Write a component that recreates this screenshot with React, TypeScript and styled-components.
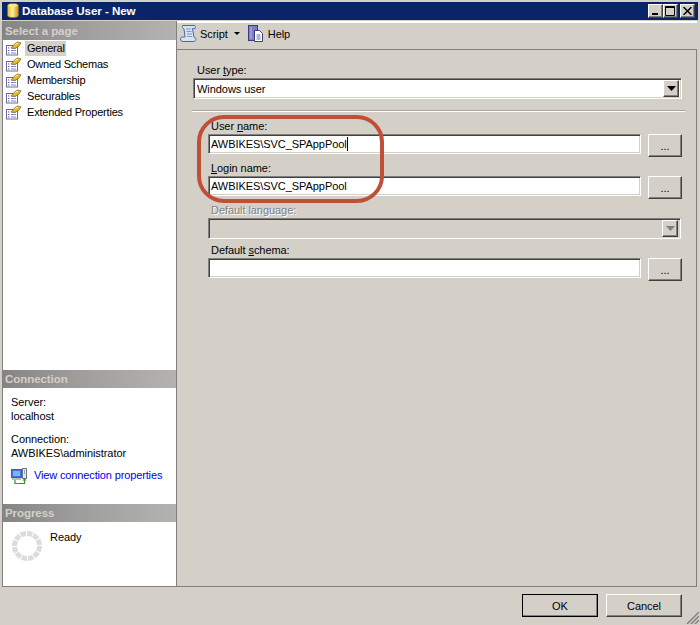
import React from "react";
import styled, { createGlobalStyle } from "styled-components";

const GlobalStyle = createGlobalStyle`
  html, body { margin: 0; padding: 0; background: #d4d0c8; }
  * { box-sizing: border-box; }
`;

const raisedBorder = `
  border: 1px solid;
  border-color: #ffffff #404040 #404040 #ffffff;
  box-shadow: inset -1px -1px 0 #808080;
`;

const sunkenBorder = `
  border: 1px solid;
  border-color: #808080 #ffffff #ffffff #808080;
  box-shadow: inset 1px 1px 0 #404040, inset -1px -1px 0 #d4d0c8;
`;

const Window = styled.div`
  position: relative;
  width: 700px;
  height: 625px;
  padding: 2px;
  background: #d4d0c8;
  font-family: "Liberation Sans", Arial, sans-serif;
  font-size: 11px;
  letter-spacing: -0.06px;
  color: #000;
  overflow: hidden;
`;

const TitleBar = styled.div`
  display: flex;
  align-items: center;
  height: 18px;
  padding: 0 3px 1px 5px;
  background: #0a246a;
  color: #fff;
  font-size: 11.6px;
  font-weight: bold;
`;

const TitleText = styled.span`
  margin-left: 3px;
  flex: 1;
`;

const CaptionButton = styled.div<{ $gap?: number }>`
  ${raisedBorder}
  display: flex;
  align-items: center;
  justify-content: center;
  width: 15px;
  height: 14px;
  margin-left: ${(p) => p.$gap ?? 0}px;
  background: #d4d0c8;
`;

const Main = styled.div`
  display: flex;
  height: 566px;
  margin-top: 1px;
  margin-right: 1px;
`;

const Sidebar = styled.div`
  display: flex;
  flex-direction: column;
  width: 175px;
  background: #fff;
  border-left: 1px solid #808080;
  border-right: 1px solid #808080;
  border-bottom: 1px solid #808080;
`;

const SectionHeader = styled.div<{ $tall?: boolean }>`
  display: flex;
  align-items: center;
  height: ${(p) => (p.$tall ? 19 : 18)}px;
  padding-left: 2px;
  background: linear-gradient(90deg, #858585 0%, #a09d9d 45%, #b5b2b2 100%);
  color: #d4d0c8;
  font-size: 11.5px;
  font-weight: bold;
`;

const PageList = styled.div`
  flex: 1;
`;

const PageRow = styled.div`
  display: flex;
  align-items: center;
  height: 16px;
  padding-left: 3px;
`;

const PageLabel = styled.span<{ $selected?: boolean }>`
  margin-left: 3px;
  padding: 0 1px 0 2px;
  line-height: 15px;
  letter-spacing: -0.2px;
  background: ${(p) => (p.$selected ? "#d4d0c8" : "transparent")};
`;

const ConnectionBody = styled.div`
  height: 116px;
  padding: 8px 0 0 8px;
  line-height: 13.5px;
`;

const ConnectionBlock = styled.div`
  margin-bottom: 10px;

  & + & {
    margin-bottom: 8px;
  }
`;

const ConnectionLink = styled.div`
  display: flex;
  align-items: center;
  letter-spacing: -0.14px;
  color: #0000ee;
`;

const LinkText = styled.span`
  margin-left: 7px;
`;

const ProgressBody = styled.div`
  display: flex;
  height: 64px;
  padding: 8px 0 0 8px;
`;

const ReadyText = styled.span`
  margin: 1px 0 0 7px;
`;

const Content = styled.div`
  display: flex;
  flex: 1;
  flex-direction: column;
`;

const Toolbar = styled.div`
  display: flex;
  align-items: center;
  height: 29px;
  padding: 0 0 5px 3px;
  border-top: 2px solid #ffffff;
  border-bottom: 1px solid #808080;
`;

const ToolLabel = styled.span`
  margin-left: 3px;
`;

const ToolCaret = styled.span`
  width: 0;
  height: 0;
  margin: 0 8px 0 6px;
  border-left: 3px solid transparent;
  border-right: 3px solid transparent;
  border-top: 3px solid #000;
`;

const Panel = styled.div`
  flex: 1;
  padding: 13px 0 0 16px;
  border-right: 1px solid #808080;
  border-bottom: 1px solid #808080;
`;

const FieldLabel = styled.div<{ $disabled?: boolean }>`
  height: 15px;
  line-height: 15px;
  color: ${(p) => (p.$disabled ? "#808080" : "#000")};
  text-shadow: ${(p) => (p.$disabled ? "1px 1px 0 #fff" : "none")};
`;

const TypeLabel = styled(FieldLabel)`
  margin-left: 4px;
`;

const Combo = styled.div<{ $width: number; $disabled?: boolean }>`
  ${sunkenBorder}
  display: flex;
  align-items: center;
  justify-content: space-between;
  width: ${(p) => p.$width}px;
  height: 21px;
  padding: 2px;
  padding-left: 3px;
  background: ${(p) => (p.$disabled ? "#d4d0c8" : "#fff")};
`;

const ComboButton = styled.div`
  ${raisedBorder}
  display: flex;
  align-items: center;
  justify-content: center;
  width: 16px;
  height: 17px;
  background: #d4d0c8;
`;

const Separator = styled.div`
  width: 493px;
  height: 2px;
  margin: 11px 0 7px -1px;
  background: #a8a5a0;
  border-bottom: 1px solid #ffffff;
`;

const Fields = styled.div`
  margin-left: 15px;
`;

const NameGroup = styled.div`
  position: relative;
`;

const Oval = styled.div`
  position: absolute;
  left: -11px;
  top: -4px;
  width: 187px;
  height: 88px;
  border: 4px solid #c04f38;
  border-radius: 27px;
  pointer-events: none;
`;

const FieldRow = styled.div`
  display: flex;
  align-items: flex-start;
  margin-bottom: 4px;
`;

const TextBox = styled.div`
  ${sunkenBorder}
  display: flex;
  align-items: center;
  width: 433px;
  height: 20px;
  padding-left: 2px;
  background: #fff;
  white-space: pre;
`;

const Caret = styled.span`
  width: 1px;
  height: 14px;
  background: #000;
`;

const BrowseButton = styled.div`
  ${raisedBorder}
  display: flex;
  align-items: flex-end;
  justify-content: center;
  width: 34px;
  height: 23px;
  margin-left: 7px;
  padding-bottom: 4px;
  background: #d4d0c8;
  line-height: 12px;
`;

const Footer = styled.div`
  display: flex;
  justify-content: flex-end;
  padding: 7px 16px 0 0;
`;

const DialogButton = styled.div<{ $default?: boolean }>`
  ${raisedBorder}
  display: flex;
  align-items: center;
  justify-content: center;
  width: 76px;
  height: 23px;
  margin-left: 8px;
  background: #d4d0c8;
  outline: ${(p) => (p.$default ? "1px solid #000" : "none")};
  outline-offset: -1px;
`;

const Grip = styled.svg`
  position: absolute;
  right: 1px;
  bottom: 1px;
`;

const DbIcon = () => (
  <svg width="12" height="15" viewBox="0 0 12 15">
    <defs>
      <linearGradient id="db" x1="0" x2="1" y1="0" y2="0">
        <stop offset="0" stopColor="#e8b83a" />
        <stop offset="0.45" stopColor="#fff09a" />
        <stop offset="1" stopColor="#c98e1c" />
      </linearGradient>
    </defs>
    <path d="M.5 2.5C.5 1 3 .5 6 .5s5.500.5 5.500 2v10c0 1.500-2.500 2-5.500 2s-5.500-.5-5.500-2z" fill="url(#db)" stroke="#8a6a20" strokeWidth="0.6" />
    <ellipse cx="6" cy="2.500" rx="4.500" ry="1.400" fill="#ffe987" />
  </svg>
);

const PageIcon = () => (
  <svg width="16" height="15" viewBox="0 0 16 15">
    <rect x="0.500" y="4.500" width="11" height="9.500" fill="#fff" stroke="#6d6d8a" />
    <path d="M2 7h1.500M2 9.500h1.500M2 12h1.500" stroke="#5b5bd0" />
    <path d="M5 7h5M5 9.500h5M5 12h5" stroke="#8080d8" />
    <path d="M5 7L9 2.500 12 1l3 1-2 3-4 2.500z" fill="#e8b828" stroke="#7a6420" strokeWidth="0.7" />
    <path d="M9 4l3-2" stroke="#fff4b0" />
  </svg>
);

const ScriptIcon = () => (
  <svg width="17" height="17" viewBox="0 0 17 17">
    <path d="M3 .5h11c1.500 0 2 1.500 1 3h-2.500l1.500 9c1 0 2 .5 2 1.500 0 1-1 2.500-2 2.500H3c-1.500 0-2.500-1-2.500-2.500s1-2 2-2h2.500L4 4C2.500 3.500 1.500.5 3 .5z" fill="#d9e2f2" stroke="#4a6c9c" />
    <path d="M6 4h5M6.500 6.500h5M7 9h5M7 11.500h5" stroke="#7e98c0" />
  </svg>
);

const HelpIcon = () => (
  <svg width="17" height="18" viewBox="0 0 17 18">
    <rect x="0.500" y="0.500" width="9" height="15" fill="#7f7fc0" stroke="#3c3c80" />
    <path d="M3 2v12" stroke="#b8b8e4" />
    <path d="M6.500 5.500h5l3 3v8h-8z" fill="#fff" stroke="#3c3c80" />
    <path d="M8.500 10h4M8.500 12h4M8.500 14h4" stroke="#6c6ca8" />
  </svg>
);

const ConnectionIcon = () => (
  <svg width="16" height="16" viewBox="0 0 16 16">
    <rect x="0.500" y="1.500" width="10" height="8" fill="#3a78d8" stroke="#50607c" />
    <rect x="2" y="3" width="7" height="5" fill="#7fb2f0" />
    <rect x="1" y="10" width="9" height="2" fill="#b8bcc4" />
    <rect x="11.500" y="0.500" width="4" height="10" fill="#e4e4ec" stroke="#70788c" />
    <path d="M13 3h1M13 5h1" stroke="#50607c" />
    <path d="M4 12v3.500h9.500V11" fill="none" stroke="#2e9a2e" strokeWidth="1.200" />
    <path d="M11.500 12.500l2-2.500 2 2.500z" fill="#2e9a2e" />
  </svg>
);

const Spinner = () => (
  <svg width="32" height="32" viewBox="0 0 32 32">
    <circle cx="16" cy="16" r="12.500" fill="none" stroke="#dcdcdc" strokeWidth="5" strokeDasharray="5.500 1" />
  </svg>
);

const ArrowDown = ({ color = "#000" }: { color?: string }) => (
  <svg width="9" height="5" viewBox="0 0 9 5">
    <path d="M0 0h9L4.500 5z" fill={color} />
  </svg>
);

const pages = ["General", "Owned Schemas", "Membership", "Securables", "Extended Properties"];

const App = () => {
  return (
    <Window>
      <GlobalStyle />
      <TitleBar>
        <DbIcon />
        <TitleText>Database User - New</TitleText>
        <CaptionButton>
          <svg width="9" height="9" viewBox="0 0 9 9"><path d="M1 7h6v2H1z" /></svg>
        </CaptionButton>
        <CaptionButton>
          <svg width="11" height="10" viewBox="0 0 11 10"><path d="M.5.5h9v9h-9zM.5 1.500h9" fill="none" stroke="#000" /></svg>
        </CaptionButton>
        <CaptionButton $gap={2}>
          <svg width="9" height="8" viewBox="0 0 9 8"><path d="M.5 0l8 8M8.500 0l-8 8" stroke="#000" strokeWidth="1.500" /></svg>
        </CaptionButton>
      </TitleBar>
      <Main>
        <Sidebar>
          <SectionHeader $tall>Select a page</SectionHeader>
          <PageList>
            {pages.map((page, i) => (
              <PageRow key={page}>
                <PageIcon />
                <PageLabel $selected={i === 0}>{page}</PageLabel>
              </PageRow>
            ))}
          </PageList>
          <SectionHeader>Connection</SectionHeader>
          <ConnectionBody>
            <ConnectionBlock>
              Server:
              <br />
              localhost
            </ConnectionBlock>
            <ConnectionBlock>
              Connection:
              <br />
              AWBIKES\administrator
            </ConnectionBlock>
            <ConnectionLink>
              <ConnectionIcon />
              <LinkText>View connection properties</LinkText>
            </ConnectionLink>
          </ConnectionBody>
          <SectionHeader>Progress</SectionHeader>
          <ProgressBody>
            <Spinner />
            <ReadyText>Ready</ReadyText>
          </ProgressBody>
        </Sidebar>
        <Content>
          <Toolbar>
            <ScriptIcon />
            <ToolLabel>Script</ToolLabel>
            <ToolCaret />
            <HelpIcon />
            <ToolLabel>Help</ToolLabel>
          </Toolbar>
          <Panel>
            <TypeLabel>User <u>t</u>ype:</TypeLabel>
            <Combo $width={489}>
              Windows user
              <ComboButton><ArrowDown /></ComboButton>
            </Combo>
            <Separator />
            <Fields>
              <NameGroup>
                <FieldLabel>&nbsp;User <u>n</u>ame:</FieldLabel>
                <FieldRow>
                  <TextBox>AWBIKES\SVC_SPAppPool<Caret /></TextBox>
                  <BrowseButton>...</BrowseButton>
                </FieldRow>
                <FieldLabel>&nbsp;<u>L</u>ogin name:</FieldLabel>
                <FieldRow>
                  <TextBox>AWBIKES\SVC_SPAppPool</TextBox>
                  <BrowseButton>...</BrowseButton>
                </FieldRow>
                <Oval />
              </NameGroup>
              <FieldLabel $disabled>&nbsp;Default language:</FieldLabel>
              <FieldRow>
                <Combo $width={473} $disabled>
                  <span />
                  <ComboButton><ArrowDown color="#808080" /></ComboButton>
                </Combo>
              </FieldRow>
              <FieldLabel>&nbsp;Default <u>s</u>chema:</FieldLabel>
              <FieldRow>
                <TextBox />
                <BrowseButton>...</BrowseButton>
              </FieldRow>
            </Fields>
          </Panel>
        </Content>
      </Main>
      <Footer>
        <DialogButton $default>OK</DialogButton>
        <DialogButton>Cancel</DialogButton>
      </Footer>
      <Grip width="13" height="13" viewBox="0 0 13 13">
        <path d="M13 1L1 13M13 5L5 13M13 9L9 13" stroke="#808080" strokeWidth="1.500" />
      </Grip>
    </Window>
  );
};

export default App;
